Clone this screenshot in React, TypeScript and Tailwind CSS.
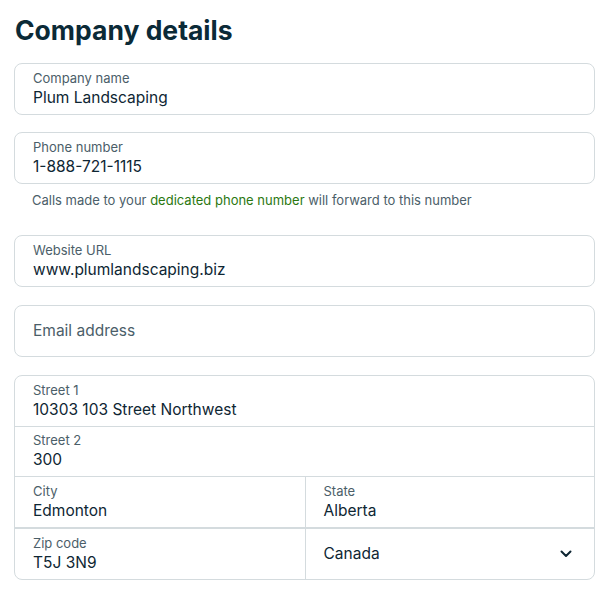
import { ReactNode } from "react";

type FieldProps = {
  label?: string;
  value?: string;
  placeholder?: string;
  className?: string;
  children?: ReactNode;
};

function Field({ label, value, placeholder, className = "", children }: FieldProps) {
  return (
    <div className={`h-[50px] px-[18px] flex flex-col justify-center ${className}`}>
      {placeholder ? (
        <span className="text-[15.5px] leading-[20px] text-[#4b5e69]">{placeholder}</span>
      ) : (
        <>
          <span className="text-[13px] leading-[17px] text-[#4b5e69]">{label}</span>
          <span className="text-[15.5px] leading-[22px] text-[#0e2633]">{value}</span>
        </>
      )}
      {children}
    </div>
  );
}

export default function App() {
  return (
    <div
      className="w-[609px] h-[595px] bg-white px-[14px] pt-[12px]"
      style={{ fontFamily: "Inter, 'Noto Sans', sans-serif" }}
    >
      <h1 className="text-[26.5px] leading-[36px] font-bold text-[#0b2a37] ml-[1px]">
        Company details
      </h1>

      <div className="mt-[15px] border border-[#d4dbde] rounded-[8px]">
        <Field label="Company name" value="Plum Landscaping" />
      </div>

      <div className="mt-[17px] border border-[#d4dbde] rounded-[8px]">
        <Field label="Phone number" value="1-888-721-1115" />
      </div>
      <p className="mt-[7px] ml-[18px] text-[13px] leading-[18px] text-[#4b5e69]">
        Calls made to your{" "}
        <span className="text-[#2b7810]">dedicated phone number</span> will forward to this
        number
      </p>

      <div className="mt-[26px] border border-[#d4dbde] rounded-[8px]">
        <Field label="Website URL" value="www.plumlandscaping.biz" />
      </div>

      <div className="mt-[18px] border border-[#d4dbde] rounded-[8px]">
        <Field placeholder="Email address" />
      </div>

      <div className="mt-[18px] border border-[#d4dbde] rounded-[8px] overflow-hidden">
        <Field label="Street 1" value="10303 103 Street Northwest" />
        <Field label="Street 2" value="300" className="border-t border-[#d4dbde]" />
        <div className="grid grid-cols-2 border-t border-[#d4dbde]">
          <Field label="City" value="Edmonton" />
          <Field label="State" value="Alberta" className="border-l border-[#d4dbde]" />
        </div>
        <div className="grid grid-cols-2 border-t-2 border-[#d4dbde]">
          <Field label="Zip code" value="T5J 3N9" />
          <div className="h-[50px] pl-[18px] pr-[22px] flex items-center justify-between border-l border-[#d4dbde]">
            <span className="text-[15.5px] leading-[22px] text-[#0e2633]">Canada</span>
            <svg width="12" height="8" viewBox="0 0 12 8" fill="none">
              <path
                d="M1.5 1.5 6 6 10.5 1.5"
                stroke="#0e2633"
                strokeWidth="2"
                strokeLinecap="round"
                strokeLinejoin="round"
              />
            </svg>
          </div>
        </div>
      </div>
    </div>
  );
}
